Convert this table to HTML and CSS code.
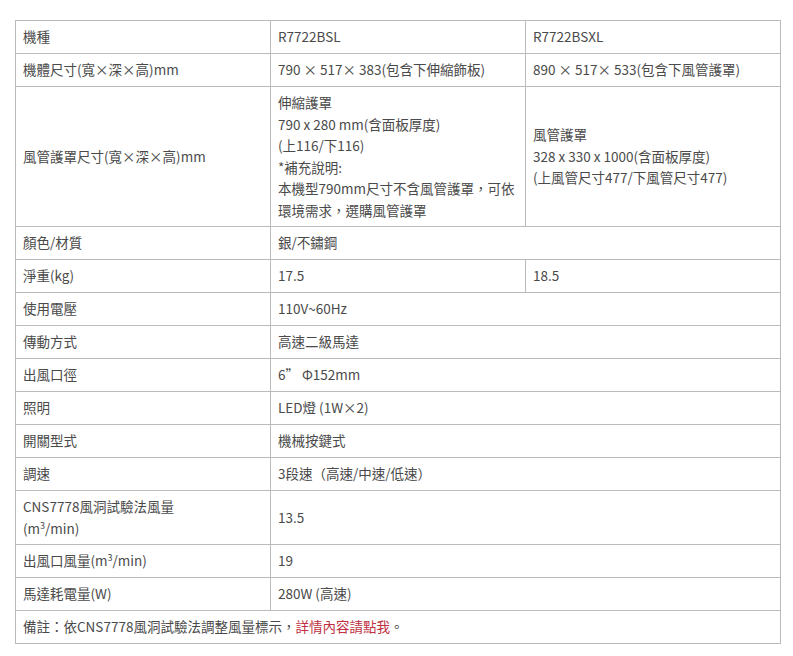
FILE: index.html
```html
<!DOCTYPE html>
<html lang="zh-Hant">
<head>
<meta charset="utf-8">
<link rel="stylesheet" href="styles.css">
</head>
<body>
<table class="spec">
  <colgroup><col class="c"><col class="c"><col class="c"></colgroup>
  <tr><td>機種</td><td>R7722BSL</td><td>R7722BSXL</td></tr>
  <tr><td>機體尺寸(寬×深×高)mm</td><td>790 × 517× 383(包含下伸縮飾板)</td><td>890 × 517× 533(包含下風管護罩)</td></tr>
  <tr><td>風管護罩尺寸(寬×深×高)mm</td><td>伸縮護罩<br>790 x 280 mm(含面板厚度)<br>(上116/下116)<br>*補充說明:<br>本機型790mm尺寸不含風管護罩，可依環境需求，選購風管護罩</td><td>風管護罩<br>328 x 330 x 1000(含面板厚度)<br>(上風管尺寸477/下風管尺寸477)</td></tr>
  <tr><td>顏色/材質</td><td colspan="2">銀/不鏽鋼</td></tr>
  <tr><td>淨重(kg)</td><td>17.5</td><td>18.5</td></tr>
  <tr><td>使用電壓</td><td colspan="2">110V~60Hz</td></tr>
  <tr><td>傳動方式</td><td colspan="2">高速二級馬達</td></tr>
  <tr><td>出風口徑</td><td colspan="2">6”&nbsp;Φ152mm</td></tr>
  <tr><td>照明</td><td colspan="2">LED燈 (1W×2)</td></tr>
  <tr><td>開關型式</td><td colspan="2">機械按鍵式</td></tr>
  <tr><td>調速</td><td colspan="2">3段速（高速/中速/低速）</td></tr>
  <tr><td>CNS7778風洞試驗法風量<br>(m<sup>3</sup>/min)</td><td colspan="2">13.5</td></tr>
  <tr><td>出風口風量(m<sup>3</sup>/min)</td><td colspan="2">19</td></tr>
  <tr><td>馬達耗電量(W)</td><td colspan="2">280W (高速)</td></tr>
  <tr><td colspan="3">備註：依CNS7778風洞試驗法調整風量標示，<a class="link" href="#">詳情內容請點我</a>。</td></tr>
</table>
</body>
</html>
```
FILE: styles.css
```css
html, body {
  margin: 0;
  padding: 0;
  background: #fff;
}
body {
  padding: 20px 12px 0 15px;
  font-family: "Noto Sans CJK TC", "Noto Sans", sans-serif;
  font-size: 13.5px;
  line-height: 21.5px;
  color: #4a4a4a;
}
.spec {
  width: 766px;
  border-collapse: collapse;
  table-layout: fixed;
}
.spec td {
  border: 1px solid #bbb;
  padding: 5px 6px 5px 7px;
  height: 22px;
  vertical-align: middle;
  text-align: left;
}
.spec sup {
  font-size: 9px;
  line-height: 0;
  vertical-align: 5px;
}
.link {
  color: #c0303f;
  text-decoration: none;
}
```
